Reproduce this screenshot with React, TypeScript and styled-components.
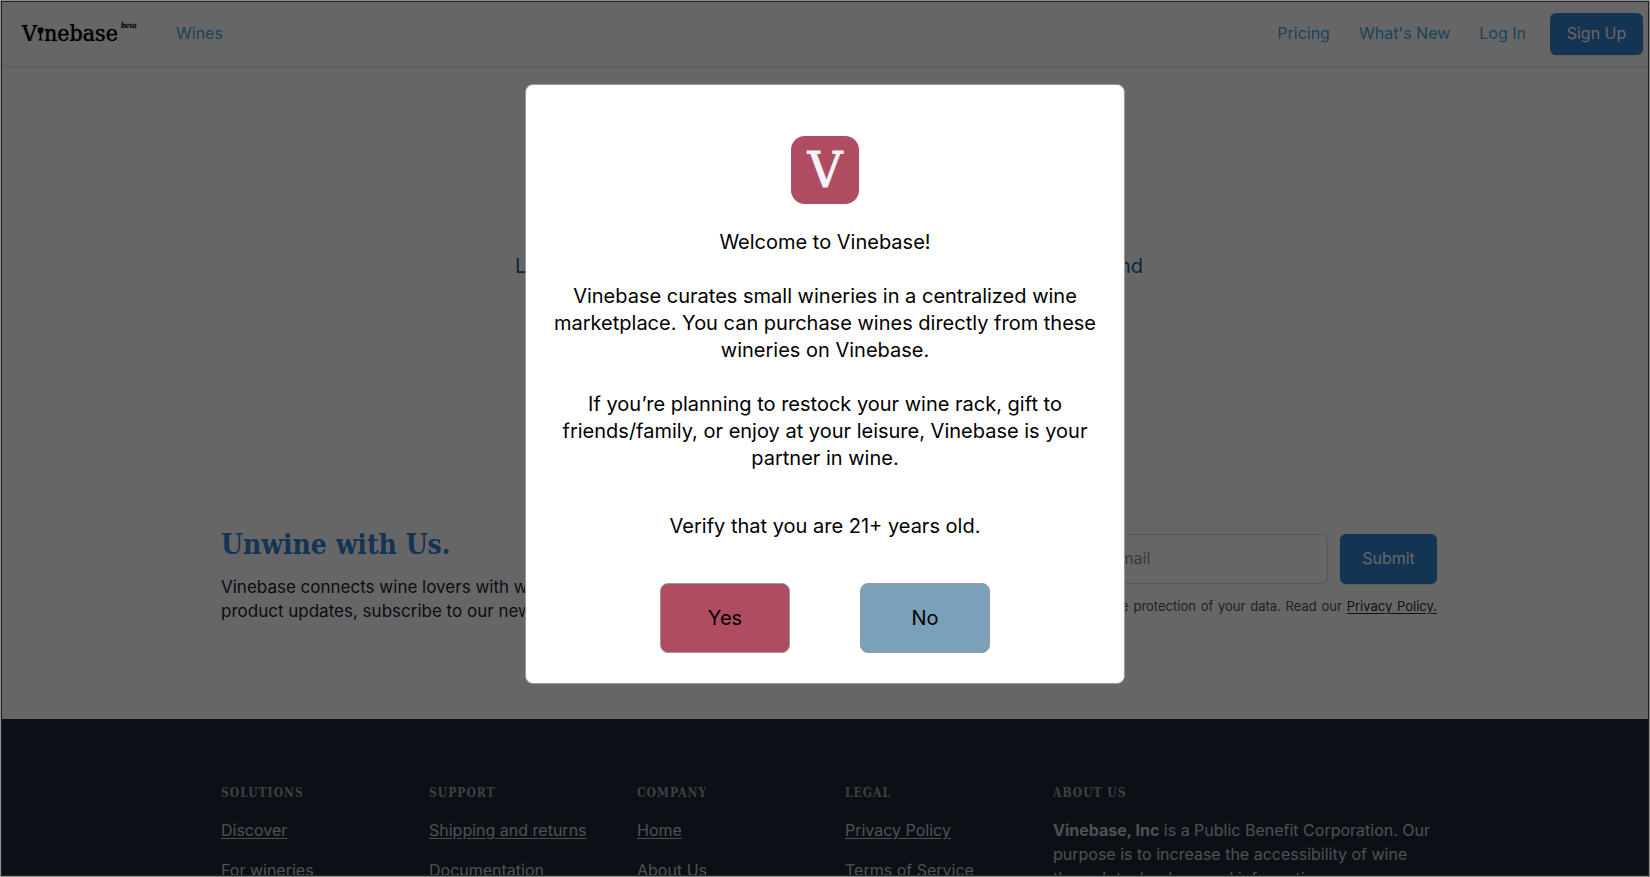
import React from "react";
import styled, { createGlobalStyle } from "styled-components";

const sans = `"Inter", "Liberation Sans", sans-serif`;
const slab = `"DejaVu Serif Condensed", "DejaVu Serif", serif`;

const GlobalStyle = createGlobalStyle`
  *, *::before, *::after { box-sizing: border-box; }
  body {
    margin: 0;
    overflow: hidden;
    background: #ffffff;
    color: #1b2333;
    font-family: ${sans};
    font-size: 16px;
    line-height: 24px;
  }
  h1, h2, h3, p, ul { margin: 0; padding: 0; }
  ul { list-style: none; }
  button, input { font: inherit; }
`;

const Page = styled.div`
  height: 100vh;
  overflow: hidden;
`;

/* ---------- Top navigation ---------- */

const NavBar = styled.header`
  display: flex;
  align-items: center;
  justify-content: space-between;
  height: 67px;
  padding: 1px 7px 0 22px;
  border-bottom: 1px solid #e5e7eb;
`;

const NavGroup = styled.nav<{ $gap: number }>`
  display: flex;
  align-items: center;
  gap: ${(p) => p.$gap}px;
`;

const NavLink = styled.a`
  padding-bottom: 2px;
  color: #40a8ec;
  text-decoration: none;
`;

const Logo = styled.a`
  display: flex;
  align-items: baseline;
  width: 122px;
  padding-bottom: 2px;
  color: #000000;
  font-family: ${slab};
  font-size: 23px;
  line-height: 32px;
  text-decoration: none;
  text-shadow: 0 0 1px #000000;
`;

const GlassIcon = styled.svg`
  flex: none;
  width: 7px;
  height: 14px;
`;

const Beta = styled.sup`
  align-self: flex-start;
  margin: 2px 0 0 3px;
  font-family: "Liberation Serif", serif;
  font-size: 9px;
  font-style: italic;
  font-weight: 400;
  line-height: 12px;
`;

const PrimaryButton = styled.button<{ $wide?: boolean }>`
  flex: none;
  width: ${(p) => (p.$wide ? 97 : 93)}px;
  height: ${(p) => (p.$wide ? 50 : 42)}px;
  padding: 0 0 2px;
  border: 0;
  border-radius: 6px;
  background: #3182ce;
  color: #ffffff;
  box-shadow: 0 1px 2px rgba(0, 0, 0, 0.1);
`;

const SignUpSlot = styled.div`
  display: flex;
  align-items: center;
  gap: 24px;
`;

/* ---------- Content ---------- */

const Container = styled.div`
  max-width: 1216px;
  margin: 0 auto;
`;

const Section = styled.section`
  padding: 0 0 0 8px;
`;

const Hero = styled(Section)`
  padding-top: 185px;
  padding-bottom: 151px;
`;

const Tagline = styled.p`
  width: 628px;
  margin: 0 auto;
  color: #285e9a;
  font-size: 20px;
  line-height: 28px;
  text-align: justify;
  text-align-last: justify;
`;

const Newsletter = styled(Section)`
  padding-top: 96px;
  padding-bottom: 96px;
`;

const NewsletterRow = styled(Container)`
  display: flex;
  align-items: center;
  justify-content: space-between;
`;

const NewsletterCopy = styled.div`
  font-size: 17px;
`;

const Heading = styled.h2`
  margin-bottom: 12px;
  color: #3182ce;
  font-family: ${slab};
  font-size: 28px;
  font-weight: 700;
  line-height: 36px;
`;

const Form = styled.form`
  width: 424px;
`;

const FieldRow = styled.div`
  display: flex;
  gap: 12px;
`;

const EmailInput = styled.input`
  flex: 1;
  min-width: 0;
  height: 50px;
  padding: 0 20px 2px 14px;
  border: 1px solid #d2d6dc;
  border-radius: 6px;
  background: #ffffff;
  &::placeholder { color: #8a909c; opacity: 1; }
`;

const HiddenLabel = styled.label`
  position: absolute;
  width: 1px;
  height: 1px;
  overflow: hidden;
  clip-path: inset(50%);
`;

const FormNote = styled.p`
  margin-top: 12px;
  color: #4b5563;
  font-size: 13px;
  line-height: 20px;
  text-align: justify;
  text-align-last: justify;
  a { color: #252f3f; text-underline-offset: 2px; }
`;

/* ---------- Footer ---------- */

const Footer = styled.footer`
  padding: 64px 0 64px 8px;
  background: #1f2937;
  color: #c4c6ca;
`;

const FooterGrid = styled(Container)`
  display: grid;
  grid-template-columns: repeat(4, 1fr) 384px;
`;

const FooterTitle = styled.h3`
  margin-bottom: 15px;
  color: #9a9da4;
  font-family: ${slab};
  font-size: 12px;
  font-weight: 700;
  letter-spacing: 1px;
  line-height: 20px;
  text-transform: uppercase;
`;

const FooterList = styled.ul`
  display: flex;
  flex-direction: column;
  gap: 16px;
  a { color: inherit; text-underline-offset: 2px; }
`;

/* ---------- Age check dialog ---------- */

const Overlay = styled.div`
  position: fixed;
  inset: 0;
  display: flex;
  align-items: flex-start;
  justify-content: center;
  padding-top: 83px;
  border: 1px solid #8a8c8a;
  background: rgba(0, 0, 0, 0.6);
  background-clip: padding-box;
  box-shadow: inset 0 0 0 1px #222526;
`;

const Dialog = styled.div`
  display: flex;
  flex-direction: column;
  align-items: center;
  gap: 27px;
  width: 600px;
  padding: 51px 24px 30px;
  border: 1px solid #999999;
  border-radius: 8px;
  background: #ffffff;
  color: #000000;
  font-size: 20px;
  line-height: 27px;
  text-align: center;
`;

const Badge = styled.div`
  width: 68px;
  height: 68px;
  margin-bottom: -2px;
  border-radius: 14px;
  background: #b04c61;
  color: #f4f4f4;
  font-family: "DejaVu Serif", serif;
  font-size: 48px;
  line-height: 68px;
  -webkit-text-stroke: 1px #f4f4f4;
`;

const Verify = styled.p`
  margin-top: 14px;
`;

const Choices = styled.div`
  display: flex;
  gap: 70px;
  margin-top: 16px;
`;

const Choice = styled.button<{ $color: string }>`
  width: 130px;
  height: 70px;
  border: 1px solid #999999;
  border-radius: 8px;
  background: ${(p) => p.$color};
  color: #000000;
`;

const columns = [
  { title: "Solutions", links: ["Discover", "For wineries"] },
  { title: "Support", links: ["Shipping and returns", "Documentation"] },
  { title: "Company", links: ["Home", "About Us"] },
  { title: "Legal", links: ["Privacy Policy", "Terms of Service"] },
];

export default function App() {
  return (
    <>
      <GlobalStyle />
      <Page>
        <NavBar>
          <NavGroup $gap={32}>
            <Logo href="#" aria-label="Vinebase beta">
              <span>V</span>
              <GlassIcon viewBox="0 0 7 14" aria-hidden="true">
                <path
                  d="M1 0.5h5c0.6 2.6 0.8 5-1.7 6.6v4.9l1.5 0.8v0.7H1.2v-0.7l1.5-0.8V7.1C0.2 5.5 0.4 3.1 1 0.5z"
                  fill="currentColor"
                />
              </GlassIcon>
              <span>nebase</span>
              <Beta>beta</Beta>
            </Logo>
            <NavLink href="#wines">Wines</NavLink>
          </NavGroup>
          <SignUpSlot>
            <NavGroup $gap={29}>
              <NavLink href="#pricing">Pricing</NavLink>
              <NavLink href="#new">What's New</NavLink>
              <NavLink href="#login">Log In</NavLink>
            </NavGroup>
            <PrimaryButton type="button">Sign Up</PrimaryButton>
          </SignUpSlot>
        </NavBar>

        <Hero>
          <Tagline>Learn about small wineries, discover their wines, and</Tagline>
        </Hero>

        <Newsletter>
          <NewsletterRow>
            <NewsletterCopy>
              <Heading>Unwine with Us.</Heading>
              <p>
                Vinebase connects wine lovers with wineries. For
                <br />
                product updates, subscribe to our newsletter.
              </p>
            </NewsletterCopy>
            <Form onSubmit={(e) => e.preventDefault()}>
              <FieldRow>
                <HiddenLabel htmlFor="email">Email</HiddenLabel>
                <EmailInput id="email" type="email" placeholder="Enter your email" />
                <PrimaryButton type="submit" $wide>
                  Submit
                </PrimaryButton>
              </FieldRow>
              <FormNote>
                We care about the protection of your data. Read our <a href="#privacy">Privacy Policy.</a>
              </FormNote>
            </Form>
          </NewsletterRow>
        </Newsletter>

        <Footer>
          <FooterGrid>
            {columns.map((column) => (
              <div key={column.title}>
                <FooterTitle>{column.title}</FooterTitle>
                <FooterList>
                  {column.links.map((link) => (
                    <li key={link}>
                      <a href="#footer">{link}</a>
                    </li>
                  ))}
                </FooterList>
              </div>
            ))}
            <div>
              <FooterTitle>About us</FooterTitle>
              <p>
                <strong>Vinebase, Inc</strong> is a Public Benefit Corporation. Our purpose is to increase the
                accessibility of wine through technology and information.
              </p>
            </div>
          </FooterGrid>
        </Footer>
      </Page>

      <Overlay>
        <Dialog role="dialog" aria-modal="true" aria-label="Age verification">
          <Badge>V</Badge>
          <p>Welcome to Vinebase!</p>
          <p>
            Vinebase curates small wineries in a centralized wine marketplace. You can purchase wines directly from
            these wineries on Vinebase.
          </p>
          <p>
            If you’re planning to restock your wine rack, gift to friends/family, or enjoy at your leisure, Vinebase
            is your partner in wine.
          </p>
          <Verify>Verify that you are 21+ years old.</Verify>
          <Choices>
            <Choice type="button" $color="#b04c61">Yes</Choice>
            <Choice type="button" $color="#7aa0ba">No</Choice>
          </Choices>
        </Dialog>
      </Overlay>
    </>
  );
}
